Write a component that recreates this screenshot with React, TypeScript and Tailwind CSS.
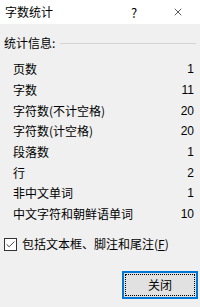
import { Check, X } from 'lucide-react';

const rows: [string, string][] = [
  ['页数', '1'],
  ['字数', '11'],
  ['字符数(不计空格)', '20'],
  ['字符数(计空格)', '20'],
  ['段落数', '1'],
  ['行', '2'],
  ['非中文单词', '1'],
  ['中文字符和朝鲜语单词', '10'],
];

export default function App() {
  return (
    <div
      className="w-[200px] h-[307px] flex flex-col bg-[#f0f0f0] text-black text-[12px] leading-none"
      style={{ fontFamily: '"Noto Sans CJK SC", "Liberation Sans", sans-serif' }}
    >
      <div className="h-[24px] bg-white flex items-center pl-[5px]">
        <span className="flex-1">字数统计</span>
        <span className="w-[10px] text-[13px] mr-[31px]">?</span>
        <X className="w-[12px] h-[12px] mr-[16px]" strokeWidth={1.3} />
      </div>

      <div className="flex items-center pl-[4px] pr-[4px] mt-[13px]">
        <span>统计信息:</span>
        <div className="flex-1 h-px bg-[#d5d5d5] ml-[5px]" />
      </div>

      <div className="flex flex-col mt-[10px] pl-[13px] pr-[6px]">
        {rows.map(([label, value]) => (
          <div key={label} className="flex items-center justify-between h-[20.7px]">
            <span>{label}</span>
            <span style={{ fontFamily: '"Liberation Sans", sans-serif' }}>{value}</span>
          </div>
        ))}
      </div>

      <div className="flex items-center pl-[4px] mt-[13px]">
        <div className="w-[13px] h-[13px] border border-[#333333] bg-white flex items-center justify-center">
          <Check className="w-[11px] h-[11px]" strokeWidth={1.6} />
        </div>
        <span className="ml-[5px]">包括文本框、脚注和尾注(<span className="underline">F</span>)</span>
      </div>

      <div className="flex justify-end pr-[2px] mt-[20px]">
        <button className="w-[76px] h-[28px] border-2 border-[#0078d7] bg-[#e1e1e1] p-[1px]">
          <div className="w-full h-full border border-dotted border-black flex items-center justify-center">
            关闭
          </div>
        </button>
      </div>
    </div>
  );
}
